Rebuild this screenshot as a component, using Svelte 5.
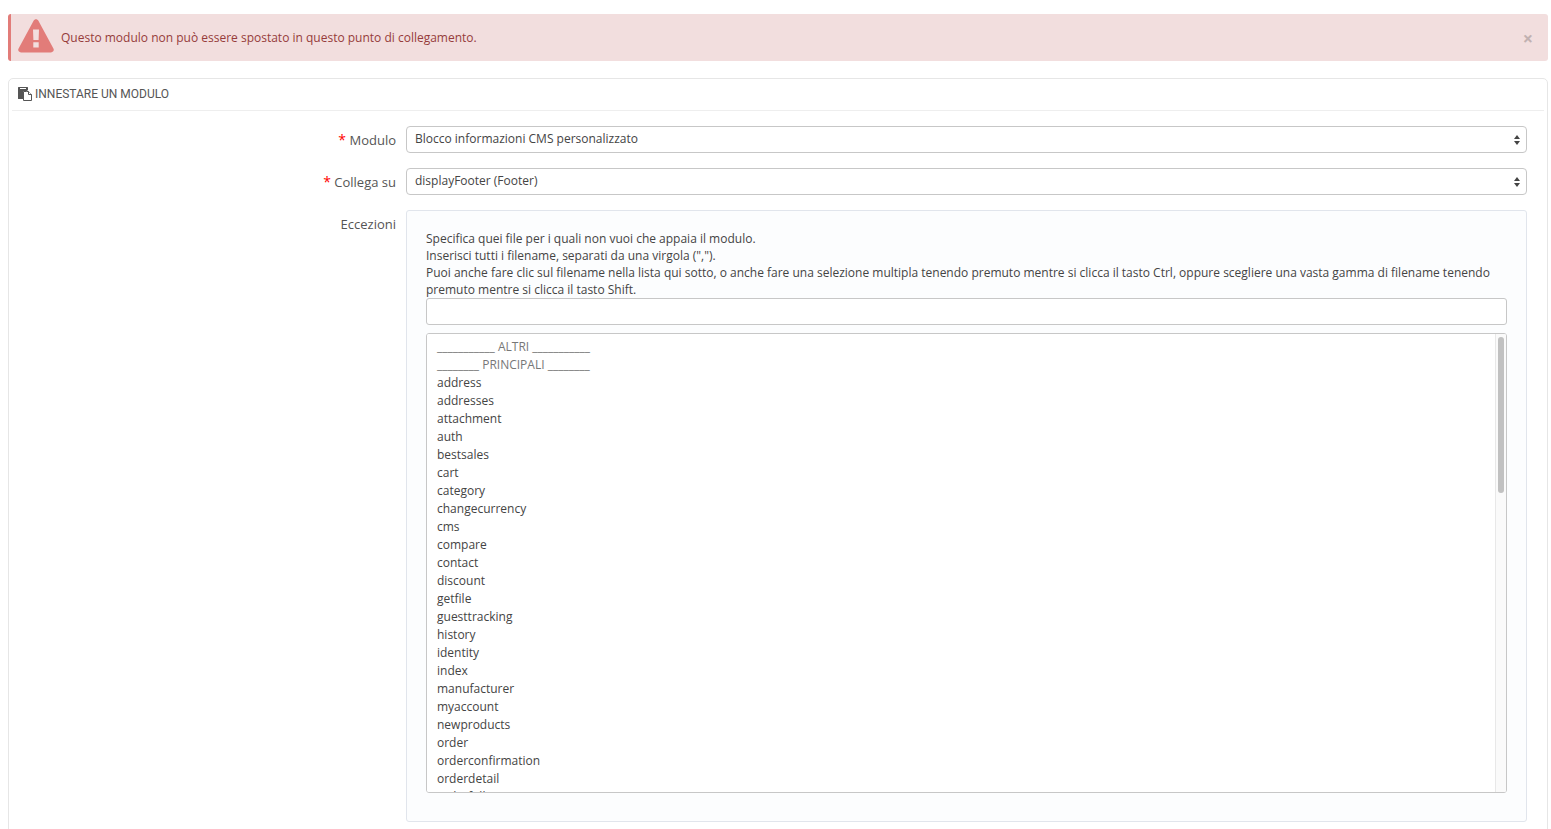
<script>
  const modules = ['Blocco informazioni CMS personalizzato', 'Blocco carrello', 'Blocco categorie'];
  const hooks = ['displayFooter (Footer)', 'displayHome', 'displayHeader'];

  const controllers = [
    'address', 'addresses', 'attachment', 'auth', 'bestsales', 'cart', 'category',
    'changecurrency', 'cms', 'compare', 'contact', 'discount', 'getfile', 'guesttracking',
    'history', 'identity', 'index', 'manufacturer', 'myaccount', 'newproducts', 'order',
    'orderconfirmation', 'orderdetail', 'orderfollow', 'orderopc', 'orderreturn', 'orderslip',
    'pagenotfound', 'parentorder', 'password', 'pdfinvoice', 'pdforderreturn', 'pdforderslip',
    'pricesdrop', 'product', 'search', 'sitemap', 'statistics', 'stores', 'supplier',
  ];

  const adminControllers = [
    'adminaccess', 'adminaddresses', 'adminattachments', 'adminattributegenerator',
    'adminattributesgroups', 'adminbackup', 'admincarriers', 'admincarrierwizard',
    'admincartrules', 'admincarts', 'admincategories', 'admincms', 'admincmscategories',
    'admincmscontent', 'admincontacts', 'admincountries', 'admincurrencies',
    'admincustomers', 'admindashboard', 'adminemails', 'adminemployees', 'adminfeatures',
    'admingenders', 'admingeolocation', 'admingroups', 'adminimages', 'adminimport',
    'admininformation', 'admininvoices', 'adminlanguages', 'adminlogin', 'adminlogs',
  ];

  let showAlert = $state(true);
  let moduleName = $state(modules[0]);
  let hookName = $state(hooks[0]);
  let selected = $state([]);
  let exceptions = $state('');
  let thumbTop = $state(0);

  const updateExceptions = () => {
    exceptions = selected.join(', ');
  };

  const updateThumb = (event) => {
    const list = event.currentTarget;
    thumbTop = (list.scrollTop / list.scrollHeight) * 100;
  };
</script>

<div class="page">
  {#if showAlert}
    <div class="alert" role="alert">
      <svg class="warning" viewBox="0 0 36 34" aria-hidden="true">
        <path
          fill-rule="evenodd"
          d="M15.6 1.7C16.7-.3 19.3-.3 20.4 1.7L35.4 29.4C36.5 31.4 35.2 33.4 33 33.4H3C.8 33.4-.5 31.4.6 29.4ZM15 10.4L15.4 20.9H20.6L21 10.4ZM15.3 23.3V28.5H20.7V23.3Z"
        />
      </svg>
      <p>Questo modulo non può essere spostato in questo punto di collegamento.</p>
      <button type="button" class="close" aria-label="Chiudi" onclick={() => (showAlert = false)}>×</button>
    </div>
  {/if}

  <form class="panel">
    <h3>
      <svg viewBox="0 0 14 14" aria-hidden="true">
        <path
          fill-rule="evenodd"
          d="M.6 0H9.4Q10 0 10 .6V3.5H9V3H5.5L5 12H.6Q0 12 0 11.4V.6Q0 0 .6 0ZM2 1V2H8V1Z"
        />
        <path d="M5 3H9V4H5V12H4V3Z" />
        <path class="sheet" d="M8.5 4.5H10.5L13.5 7.5V13.5H5.5V4.5Z" />
        <path class="sheet" d="M10.5 4.5V7.5H13.5" />
      </svg>
      Innestare un modulo
    </h3>

    <div class="row">
      <label for="module"><span class="required">*</span> Modulo</label>
      <div class="field select">
        <select id="module" bind:value={moduleName}>
          {#each modules as name}
            <option>{name}</option>
          {/each}
        </select>
        <svg viewBox="0 0 6 10" aria-hidden="true"><path d="M3 0L6 4H0ZM0 6H6L3 10Z" /></svg>
      </div>
    </div>

    <div class="row">
      <label for="hook"><span class="required">*</span> Collega su</label>
      <div class="field select">
        <select id="hook" bind:value={hookName}>
          {#each hooks as name}
            <option>{name}</option>
          {/each}
        </select>
        <svg viewBox="0 0 6 10" aria-hidden="true"><path d="M3 0L6 4H0ZM0 6H6L3 10Z" /></svg>
      </div>
    </div>

    <div class="row">
      <label for="exceptions">Eccezioni</label>
      <div class="field">
        <div class="well">
          <p>
            Specifica quei file per i quali non vuoi che appaia il modulo.<br />
            Inserisci tutti i filename, separati da una virgola (",").<br />
            Puoi anche fare clic sul filename nella lista qui sotto, o anche fare una selezione multipla
            tenendo premuto mentre si clicca il tasto Ctrl, oppure scegliere una vasta gamma di filename
            tenendo premuto mentre si clicca il tasto Shift.
          </p>
          <input id="exceptions" type="text" bind:value={exceptions} />
          <div class="list-box">
            <select
              class="list"
              multiple
              size="25"
              aria-label="Lista dei filename"
              bind:value={selected}
              onchange={updateExceptions}
              onscroll={updateThumb}
            >
              <option disabled>___________ ALTRI ___________</option>
              <option disabled>________ PRINCIPALI ________</option>
              {#each controllers as name}
                <option>{name}</option>
              {/each}
              <option disabled>____________ ADMIN ____________</option>
              {#each adminControllers as name}
                <option>{name}</option>
              {/each}
            </select>
            <div class="track" aria-hidden="true">
              <div class="thumb" style={`top: ${thumbTop}%`}></div>
            </div>
          </div>
        </div>
      </div>
    </div>
  </form>
</div>

<style>
  :global(body) {
    background: #fff;
  }

  .page {
    box-sizing: border-box;
    height: 100vh;
    overflow: hidden;
    padding: 14px 3px 0 8px;
    color: #555;
    font: 12px/17px 'Open Sans', sans-serif;
  }

  .page * {
    box-sizing: border-box;
  }

  p {
    margin: 0;
  }

  .alert {
    display: flex;
    align-items: center;
    height: 47px;
    margin-bottom: 17px;
    border-left: 3px solid #e27c79;
    border-radius: 3px;
    padding: 0 15px 0 7px;
    color: #963c3b;
    background: #f2dede;
  }

  .warning {
    width: 36px;
    height: 34px;
    margin: 0 7px 3px 0;
    fill: #e27c79;
  }

  .alert p {
    flex: 1;
  }

  .close {
    border: 0;
    padding: 0;
    color: #c1b1b1;
    background: none;
    font: 700 18px/18px 'Open Sans', sans-serif;
    cursor: pointer;
  }

  .panel {
    min-height: 800px;
    border: 1px solid #e6e6e6;
    border-radius: 5px;
    padding: 0 15px 20px;
  }

  h3 {
    display: flex;
    align-items: center;
    gap: 3px;
    height: 32px;
    margin: 0 -12px 15px;
    border-bottom: 1px solid #eee;
    padding: 0 6px 2px;
    color: #555;
    font: 400 12px/20px Roboto, sans-serif;
    text-transform: uppercase;
  }

  h3 svg {
    width: 14px;
    height: 14px;
    fill: #555;
  }

  h3 .sheet {
    fill: #fff;
    stroke: #555;
  }

  .row {
    display: grid;
    grid-template-columns: 1fr 3fr;
    margin-bottom: 15px;
  }

  label {
    padding: 5px 5px 0;
    font-size: 13px;
    line-height: 18px;
    text-align: right;
  }

  .required {
    color: #f00;
    font-size: 14px;
  }

  .field {
    min-width: 0;
    padding: 0 5px;
  }

  .select {
    display: grid;
    align-items: center;
  }

  .select select,
  .select svg {
    grid-area: 1 / 1;
  }

  .select svg {
    justify-self: end;
    width: 6px;
    height: 10px;
    margin-right: 7px;
    fill: #444;
    pointer-events: none;
  }

  select,
  input {
    display: block;
    width: 100%;
    height: 27px;
    margin: 0;
    border: 1px solid #c7c7c7;
    border-radius: 4px;
    padding: 0 8px 2px;
    appearance: none;
    color: #444;
    background: #fff;
    font: 12px/17px 'Open Sans', sans-serif;
  }

  input {
    border-radius: 3px;
  }

  .well {
    border: 1px solid #e1e5ec;
    border-radius: 3px;
    padding: 19px 19px 28px;
    color: #444;
    background: #fcfdfe;
  }

  .list-box {
    position: relative;
    margin-top: 8px;
  }

  .list {
    height: 460px;
    border-radius: 3px;
    padding: 4px 8px;
    overflow-y: scroll;
    scrollbar-width: none;
  }

  .list option {
    min-height: 18px;
    padding: 0 2px;
    line-height: 18px;
  }

  .list option:disabled {
    color: #777;
  }

  .track {
    position: absolute;
    top: 1px;
    right: 1px;
    bottom: 1px;
    width: 11px;
    border-left: 1px solid #e8e8e8;
    border-radius: 0 2px 2px 0;
    background: #fafafa;
    pointer-events: none;
  }

  .thumb {
    position: absolute;
    right: 2px;
    width: 6px;
    height: 34%;
    margin-top: 3px;
    border-radius: 3px;
    background: #c1c1c1;
  }
</style>
